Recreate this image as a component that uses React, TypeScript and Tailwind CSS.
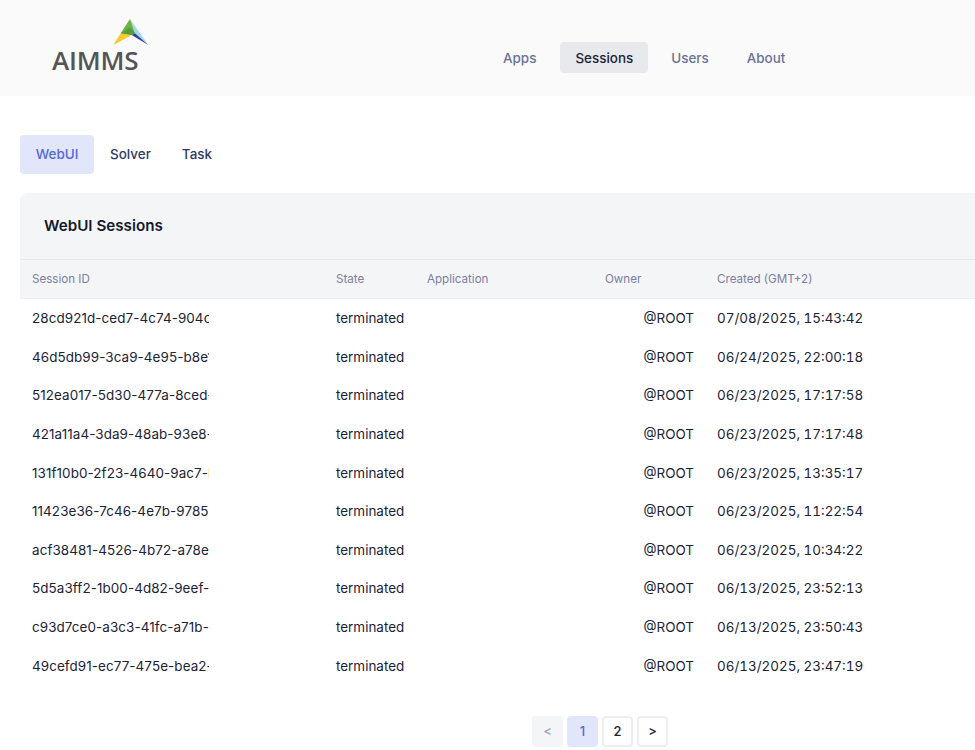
const sessions = [
  ["28cd921d-ced7-4c74-904c-3fa81b7e2d10", "07/08/2025, 15:43:42"],
  ["46d5db99-3ca9-4e95-b8e1-72c04ad9e611", "06/24/2025, 22:00:18"],
  ["512ea017-5d30-477a-8ced-19b6f3a07c42", "06/23/2025, 17:17:58"],
  ["421a11a4-3da9-48ab-93e8-6d20c7f1ba35", "06/23/2025, 17:17:48"],
  ["131f10b0-2f23-4640-9ac7-b84e15d9a023", "06/23/2025, 13:35:17"],
  ["11423e36-7c46-4e7b-9785-0ea3d2c6f718", "06/23/2025, 11:22:54"],
  ["acf38481-4526-4b72-a78e-5c91f07b3de6", "06/23/2025, 10:34:22"],
  ["5d5a3ff2-1b00-4d82-9eef-2a67c8d41f90", "06/13/2025, 23:52:13"],
  ["c93d7ce0-a3c3-41fc-a71b-5e08b2f6d934", "06/13/2025, 23:50:43"],
  ["49cefd91-ec77-475e-bea2-8f13d6a07c25", "06/13/2025, 23:47:19"],
];

function Logo() {
  return (
    <div className="flex flex-col items-end w-[97px] ml-[52px] mt-[19px]">
      <svg width="36" height="27" viewBox="0 0 36 27">
        <polygon points="17,0 35.3,26 22,14.3" fill="#a5d8f0" />
        <polygon points="17,0 7.7,14.3 18.7,16 22,14.3" fill="#6cb33f" />
        <polygon points="0.3,26 7.7,14.3 18.7,16" fill="#f6c92d" />
        <polygon points="18.7,16 35.3,26 22,14.3" fill="#2f3f9e" />
        <polygon points="7.7,14.3 17,8.3 22,14.3 18.7,16" fill="#569a3d" />
      </svg>
      <div className="w-full mt-[1px] font-['Open_Sans',sans-serif] text-[26px] leading-[26px] font-semibold text-[#555555] tracking-[-0.2px]">
        AIMMS
      </div>
    </div>
  );
}

const navLink = "flex items-center h-[31px] pt-[1px]";

export default function App() {
  return (
    <div className="h-[750px] overflow-hidden bg-white font-['Inter',sans-serif] text-[13.45px] text-[#1b2238]">
      <header className="h-[96px] bg-[#fafafa] flex items-start">
        <Logo />
        <nav className="flex items-center gap-[8px] ml-[339px] mt-[42px] font-medium text-[#6a7196]">
          <a className={navLink + " px-[15px]"}>Apps</a>
          <a className={navLink + " ml-[1px] pl-[15px] pr-[15px] rounded bg-[#e8e9ed] text-[#1b2238]"}>Sessions</a>
          <a className={navLink + " px-[15px]"}>Users</a>
          <a className={navLink + " px-[15px]"}>About</a>
        </nav>
      </header>

      <main className="pl-[20px] pt-[39px]">
        <div className="flex items-center font-medium text-[#303a66]">
          <button className="h-[39px] w-[74px] rounded bg-[#e2e6fa] text-[#5468d8]">WebUI</button>
          <button className="h-[39px] ml-[16px]">Solver</button>
          <button className="h-[39px] ml-[31px]">Task</button>
        </div>

        <section className="mt-[19px] w-[1000px]">
          <div className="h-[67px] pt-[1px] bg-[#f4f5f7] rounded-t-lg border-b border-[#e9eaee] flex items-center pl-[24px]">
            <h2 className="text-[15.2px] font-semibold text-[#14192e]">WebUI Sessions</h2>
          </div>
          <table className="table-fixed w-full border-collapse text-left">
            <thead className="bg-[#f4f5f7] text-[11.6px] text-[#7a80a0]">
              <tr className="h-[38px] border-b border-[#eceef2]">
                <th className="w-[304px] pl-[12px] pt-[2px] font-normal">Session ID</th>
                <th className="w-[91px] pl-[12px] pt-[2px] font-normal">State</th>
                <th className="w-[178px] pl-[12px] pt-[2px] font-normal">Application</th>
                <th className="w-[112px] pl-[12px] pt-[2px] font-normal">Owner</th>
                <th className="pl-[12px] pt-[2px] font-normal">Created (GMT+2)</th>
              </tr>
            </thead>
            <tbody>
              {sessions.map(([id, created]) => (
                <tr key={id} className="h-[38.6px]">
                  <td className="pl-[12px] pt-[2px]">
                    <div className="w-[177px] overflow-hidden whitespace-nowrap tracking-[0.08px]">{id}</div>
                  </td>
                  <td className="pl-[12px] pt-[2px]">terminated</td>
                  <td className="pl-[12px] pt-[2px]"></td>
                  <td className="pr-[11px] pt-[2px] text-right">@ROOT</td>
                  <td className="pl-[12px] pt-[2px] tabular-nums">{created}</td>
                </tr>
              ))}
            </tbody>
          </table>
        </section>

        <div className="mt-[32px] ml-[512px] flex gap-[4px] text-[13px] font-medium">
          <button className="w-[31px] h-[31px] rounded bg-[#f4f5f7] text-[#a0a4b4]">&lt;</button>
          <button className="w-[31px] h-[31px] rounded bg-[#e2e6fa] text-[#5468d8]">1</button>
          <button className="w-[31px] h-[31px] rounded border-2 border-[#eceef2]">2</button>
          <button className="w-[31px] h-[31px] rounded border-2 border-[#eceef2]">&gt;</button>
        </div>
      </main>
    </div>
  );
}
